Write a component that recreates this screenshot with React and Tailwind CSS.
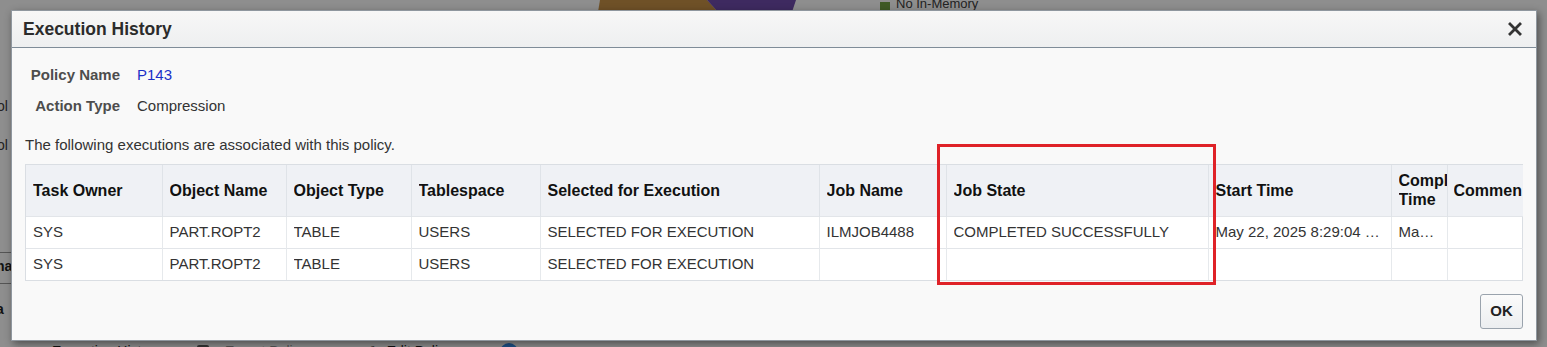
import React from "react";

const cols = [
  { h: "Task Owner", w: 137 },
  { h: "Object Name", w: 124 },
  { h: "Object Type", w: 125 },
  { h: "Tablespace", w: 129 },
  { h: "Selected for Execution", w: 279 },
  { h: "Job Name", w: 127 },
  { h: "Job State", w: 262 },
  { h: "Start Time", w: 183 },
  { h: "Compl Time", w: 56 },
  { h: "Commen", w: 76 },
];

const rows = [
  ["SYS", "PART.ROPT2", "TABLE", "USERS", "SELECTED FOR EXECUTION", "ILMJOB4488", "COMPLETED SUCCESSFULLY", "May 22, 2025 8:29:04 PM", "May 22, 2025", ""],
  ["SYS", "PART.ROPT2", "TABLE", "USERS", "SELECTED FOR EXECUTION", "", "", "", "", ""],
];

export default function App() {
  return (
    <div
      className="relative w-[1547px] h-[347px] overflow-hidden bg-[#8e8e8e]"
      style={{ fontFamily: '"Liberation Sans", Arial, sans-serif' }}
    >
      {/* background page (dimmed) */}
      <svg className="absolute left-[590px] top-0" width="220" height="12">
        <polygon points="10,0 117,0 128,12 8,12" fill="#6f5127" />
        <polygon points="117,0 206,0 202,12 128,12" fill="#3e2a60" />
      </svg>
      <div className="absolute left-[880px] top-[-6px] flex items-center gap-[6px] text-[13px] text-[#222]">
        <span className="w-[10px] h-[10px] bg-[#3f5a25] inline-block mt-[6px]" />
        <span>No In-Memory</span>
      </div>
      <div className="absolute left-[-3px] top-[96px] text-[14px] text-[#222]">ol</div>
      <div className="absolute left-[-3px] top-[135px] text-[14px] text-[#222]">ol</div>
      <div className="absolute left-0 top-[252px] w-[12px] h-px bg-[#555]" />
      <div className="absolute left-[-4px] top-[256px] text-[14px] font-bold text-[#111]">na</div>
      <div className="absolute left-0 top-[283px] w-[12px] h-px bg-[#555]" />
      <div className="absolute left-[-4px] top-[299px] text-[14px] font-bold text-[#111]">a</div>
      <div className="absolute left-[52px] top-[341px] flex items-center text-[14px] text-[#111]">
        <span>Execution History</span>
        <span className="ml-[36px] w-[12px] h-[14px] border-2 border-[#333] rounded-[2px]" />
        <span className="ml-[16px] text-[#555]">Export Policy</span>
        <span className="ml-[62px] text-[#333]">✎</span>
        <span className="ml-[6px]">Edit Policy</span>
        <span className="ml-[48px] w-[18px] h-[18px] rounded-full bg-[#1c4f86]" />
      </div>

      {/* dialog */}
      <div className="absolute left-[11px] top-[10px] w-[1526px] h-[331px] bg-[#f9f9f9] border border-[#8f979f] shadow-[2px_3px_8px_rgba(0,0,0,0.45)] flex flex-col">
        <div className="h-[37px] shrink-0 flex items-center justify-between pl-[11px] pr-[14px] bg-gradient-to-b from-[#f7f7f7] to-[#eeeff0] border-b border-[#7f8c98]">
          <span className="text-[17.5px] font-bold text-[#2b2b2b]">Execution History</span>
          <svg width="14" height="14" viewBox="0 0 14 14">
            <path d="M2 2 L12 12 M12 2 L2 12" stroke="#333" strokeWidth="2.8" strokeLinecap="square" />
          </svg>
        </div>

        <div className="flex-1 flex flex-col px-[13px] pt-[12px]">
          <div className="grid grid-cols-[95px_1fr] gap-x-[17px] text-[15px]">
            <div className="h-[31px] flex items-center justify-end font-bold text-[#4d4d4d]">Policy Name</div>
            <div className="h-[31px] flex items-center text-[#1a2fc7]">P143</div>
            <div className="h-[31px] flex items-center justify-end font-bold text-[#4d4d4d]">Action Type</div>
            <div className="h-[31px] flex items-center text-[#333]">Compression</div>
          </div>

          <div className="mt-[13px] text-[15px] leading-[20px] text-[#333]">
            The following executions are associated with this policy.
          </div>

          <div className="mt-[9px] w-[1498px] border border-[#dadee3] bg-white">
            <table className="table-fixed border-collapse w-full">
              <colgroup>
                {cols.map((c, i) => (
                  <col key={i} style={{ width: c.w - (i === 0 ? 1 : 0) }} />
                ))}
              </colgroup>
              <thead>
                <tr className="h-[51px] bg-[#eff1f5]">
                  {cols.map((c, i) => (
                    <th
                      key={i}
                      className={`text-left align-middle font-bold text-[16px] leading-[19px] text-[#111] overflow-hidden ${i === 9 ? "pl-[6px]" : "pl-[7px]"} pr-0 ${i > 0 ? "border-l border-[#dfe3e8]" : ""}`}
                    >
                      {i === 8 ? (
                        <div className="h-[38px] overflow-hidden whitespace-nowrap">
                          <div>Compl</div>
                          <div>Time</div>
                        </div>
                      ) : (
                        <div className="whitespace-nowrap overflow-hidden">{c.h}</div>
                      )}
                    </th>
                  ))}
                </tr>
              </thead>
              <tbody>
                {rows.map((r, ri) => (
                  <tr key={ri} className="h-[32px] border-t border-[#e2e5e9]">
                    {r.map((v, ci) => (
                      <td
                        key={ci}
                        className={`text-[15px] text-[#333] align-middle pl-[7px] pr-[6px] ${ci > 0 ? "border-l border-[#e6e9ec]" : ""}`}
                      >
                        <div className="whitespace-nowrap overflow-hidden text-ellipsis">{v}</div>
                      </td>
                    ))}
                  </tr>
                ))}
              </tbody>
            </table>
          </div>

          <div className="flex justify-end mt-[13px]">
            <button className="w-[43px] h-[35px] rounded-[3px] border border-[#9aa3ad] bg-gradient-to-b from-[#fbfbfb] to-[#eceef0] text-[15px] font-bold text-[#222]">
              OK
            </button>
          </div>
        </div>

        {/* red annotation box */}
        <div className="absolute left-[925px] top-[133px] w-[279px] h-[141px] border-[3px] border-[#df2228] pointer-events-none" />
      </div>
    </div>
  );
}
